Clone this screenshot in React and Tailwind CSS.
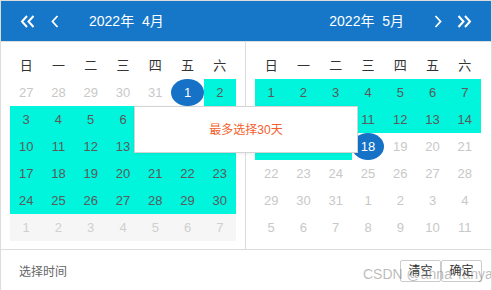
import React from "react";

const weekDays = ["日", "一", "二", "三", "四", "五", "六"];

const buildLeft = () => {
    const cells = [];
    [27, 28, 29, 30, 31].forEach((d) => cells.push({ d, type: "muted" }));
    cells.push({ d: 1, type: "start" });
    for (let d = 2; d <= 30; d++) cells.push({ d, type: "range" });
    for (let d = 1; d <= 7; d++) cells.push({ d, type: "next" });
    return cells;
};

const buildRight = () => {
    const cells = [];
    for (let d = 1; d <= 17; d++) cells.push({ d, type: "range" });
    cells.push({ d: 18, type: "start" });
    for (let d = 19; d <= 31; d++) cells.push({ d, type: "muted" });
    for (let d = 1; d <= 11; d++) cells.push({ d, type: "muted" });
    return cells;
};

const cellClass = {
    muted: "text-[#c8c8c8]",
    range: "bg-[#00f5dc] text-[#5a5a5a]",
    start: "bg-[#1572c6] text-white rounded-[50%]",
    next: "bg-[#f6f6f6] text-[#d0d0d0]",
};

const DoubleLeft = () => (
    <svg width="15" height="13" viewBox="0 0 15 13" fill="none" stroke="white" strokeWidth="2">
        <polyline points="7,1 2,6.5 7,12" />
        <polyline points="13.5,1 8.5,6.5 13.5,12" />
    </svg>
);

const DoubleRight = () => (
    <svg width="15" height="13" viewBox="0 0 15 13" fill="none" stroke="white" strokeWidth="2">
        <polyline points="1.5,1 6.5,6.5 1.5,12" />
        <polyline points="8,1 13,6.5 8,12" />
    </svg>
);

const SingleLeft = () => (
    <svg width="8" height="13" viewBox="0 0 8 13" fill="none" stroke="white" strokeWidth="1.8">
        <polyline points="6.5,1 1.5,6.5 6.5,12" />
    </svg>
);

const SingleRight = () => (
    <svg width="8" height="13" viewBox="0 0 8 13" fill="none" stroke="white" strokeWidth="1.8">
        <polyline points="1.5,1 6.5,6.5 1.5,12" />
    </svg>
);

const Month = ({ cells, className }) => (
    <div className={className}>
        <div className="grid grid-cols-7 h-[27px] items-center text-[13px] text-[#333]">
            {weekDays.map((w) => (
                <div key={w} className="text-center">{w}</div>
            ))}
        </div>
        <div className="grid grid-cols-7">
            {cells.map((c, i) => (
                <div
                    key={i}
                    className={`h-[27px] flex items-center justify-center text-[13px] ${cellClass[c.type]}`}
                >
                    {c.d}
                </div>
            ))}
        </div>
    </div>
);

export default function App() {
    return (
        <div
            className="relative w-[492px] h-[290px] bg-white border-t border-x border-[#dcdcdc] overflow-hidden"
            style={{ fontFamily: '"Liberation Sans", "Noto Sans CJK SC", sans-serif' }}
        >
            {/* header */}
            <div className="h-[41px] bg-[#1677c9] flex items-center text-white border-b border-[#dcdcdc]">
                <div className="w-[245px] flex items-center pl-[19px]">
                    <DoubleLeft />
                    <span className="ml-[16px]"><SingleLeft /></span>
                    <span className="ml-[30px] text-[14px] whitespace-pre">2022年  4月</span>
                </div>
                <div className="flex-1 flex items-center justify-end pr-[19px]">
                    <span className="text-[14px] whitespace-pre">2022年  5月</span>
                    <span className="ml-[30px]"><SingleRight /></span>
                    <span className="ml-[15px]"><DoubleRight /></span>
                </div>
            </div>

            {/* body */}
            <div className="flex border-b border-[#dcdcdc]">
                <Month cells={buildLeft()} className="w-[245px] px-[9px] pt-[10px] pb-[8px] border-r border-[#dcdcdc]" />
                <Month cells={buildRight()} className="flex-1 pl-[9px] pr-[10px] pt-[10px] pb-[8px]" />
            </div>

            {/* footer */}
            <div className="h-[40px] flex items-center justify-between pl-[18px] pr-[9px]">
                <span className="text-[12px] text-[#666] mt-[3px]">选择时间</span>
                <div className="flex mt-[2px]">
                    <button className="w-[41px] h-[22px] border border-[#ccc] rounded-[2px] text-[12px] text-[#333] bg-white">清空</button>
                    <button className="w-[41px] h-[22px] border border-[#ccc] rounded-[2px] text-[12px] text-[#333] bg-white">确定</button>
                </div>
            </div>

            {/* tip popup */}
            <div className="absolute left-[133px] top-[105px] w-[224px] h-[47px] bg-white border border-[#d4d4d4] shadow-[0_1px_3px_rgba(0,0,0,0.08)] flex items-center justify-center">
                <span className="text-[12px] text-[#f4602c]">最多选择30天</span>
            </div>

            {/* watermark */}
            <div className="absolute left-[362px] top-[263px] text-[14px] text-[rgba(120,120,120,0.5)] pointer-events-none whitespace-nowrap">
                CSDN @anna Tanya
            </div>
        </div>
    );
}
